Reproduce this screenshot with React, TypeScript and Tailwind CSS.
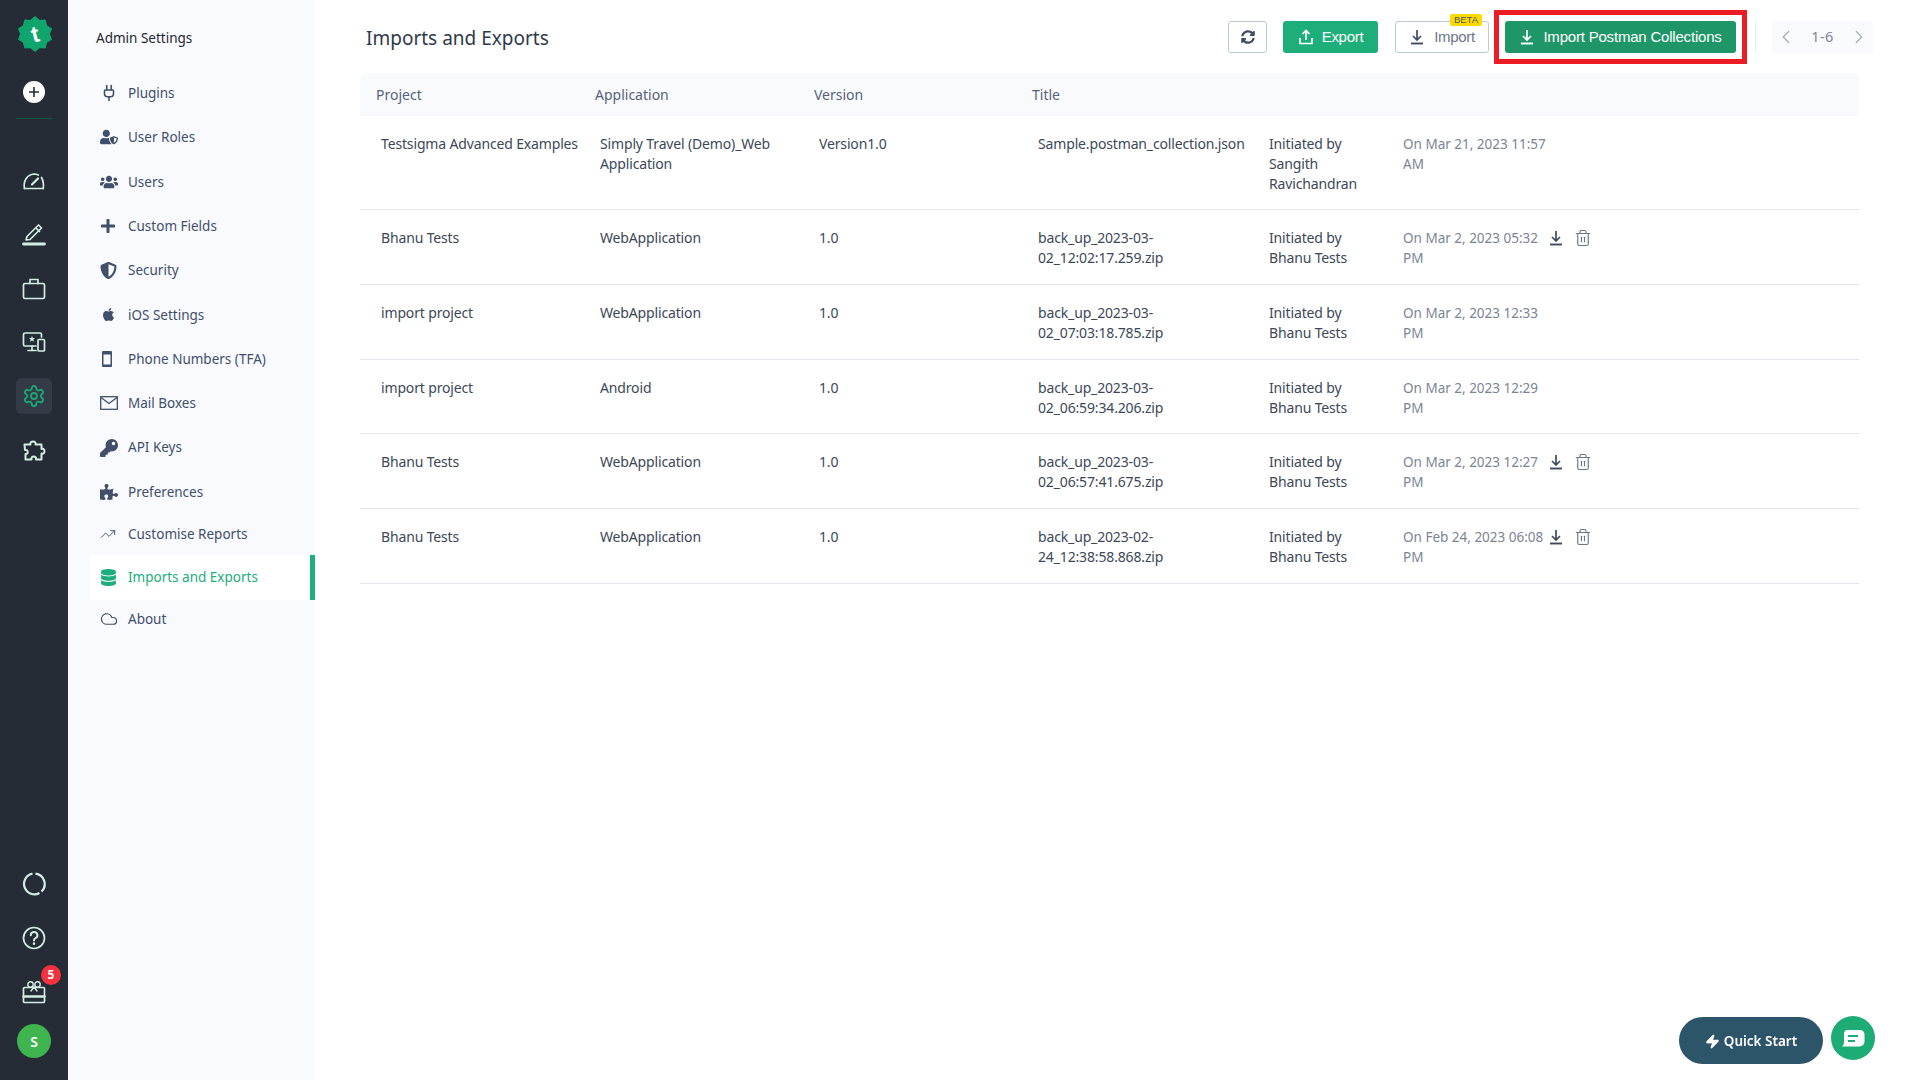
import React from "react";
import { Plug, Trash2, ChevronLeft, ChevronRight, Zap, TrendingUp, Cloud } from "lucide-react";
import { FaUserShield, FaUsers, FaShieldAlt, FaApple, FaKey, FaPuzzlePiece, FaDatabase, FaPlus, FaSyncAlt } from "react-icons/fa";

function PhoneIcon() {
  return (
    <svg width="14" height="18" viewBox="0 0 14 18">
      <rect x="2" y="1" width="10" height="16" rx="1" fill="#414f6b" />
      <rect x="3.5" y="4.5" width="7" height="10" fill="#f9fafd" />
    </svg>
  );
}
function MailIcon() {
  return (
    <svg width="18" height="14" viewBox="0 0 18 14" fill="none" stroke="#414f6b" strokeWidth="1.3">
      <rect x="0.7" y="0.7" width="16.6" height="12.6" />
      <path d="M1 1.5l8 6 8-6" />
    </svg>
  );
}
function DownArrow({ size = 16, color = "currentColor" }: { size?: number; color?: string }) {
  return (
    <svg width={size} height={size} viewBox="0 0 16 16" fill="none" stroke={color} strokeWidth="1.7">
      <path d="M8 1v9.5M4 7l4 4 4-4" />
      <path d="M2 14.5h12" strokeWidth="1.9" />
    </svg>
  );
}
function UpTray() {
  return (
    <svg width="16" height="16" viewBox="0 0 16 16" fill="none" stroke="currentColor" strokeWidth="1.7">
      <path d="M8 11V1.500M4.500 5L8 1.500 11.500 5" />
      <path d="M2 9v5.500h12V9" />
    </svg>
  );
}

const nav: { label: string; h: string; icon: React.ReactNode; active?: boolean }[] = [
  { label: "Plugins", h: "h-[44.3px]", icon: <Plug size={18} strokeWidth={2.1} /> },
  { label: "User Roles", h: "h-[44.3px]", icon: <FaUserShield size={18} /> },
  { label: "Users", h: "h-[44.3px]", icon: <FaUsers size={18} /> },
  { label: "Custom Fields", h: "h-[44.3px]", icon: <FaPlus size={16} /> },
  { label: "Security", h: "h-[44.3px]", icon: <FaShieldAlt size={17} /> },
  { label: "iOS Settings", h: "h-[44.3px]", icon: <FaApple size={15} className="ml-[1px]" /> },
  { label: "Phone Numbers (TFA)", h: "h-[44.3px]", icon: <PhoneIcon /> },
  { label: "Mail Boxes", h: "h-[44.3px]", icon: <MailIcon /> },
  { label: "API Keys", h: "h-[44.3px]", icon: <FaKey size={18} /> },
  { label: "Preferences", h: "h-[44.3px]", icon: <FaPuzzlePiece size={18} /> },
  { label: "Customise Reports", h: "h-[41px]", icon: <TrendingUp size={16} strokeWidth={1.4} /> },
  { label: "Imports and Exports", h: "h-[45px]", icon: <FaDatabase size={17} />, active: true },
  { label: "About", h: "h-[39px]", icon: <Cloud size={18} strokeWidth={1.6} /> },
];

const rows = [
  { p: "Testsigma Advanced Examples", a: "Simply Travel (Demo)_Web Application", v: "Version1.0", t: "Sample.postman_collection.json", i: "Initiated by Sangith Ravichandran", d: "On Mar 21, 2023 11:57 AM", act: false },
  { p: "Bhanu Tests", a: "WebApplication", v: "1.0", t: "back_up_2023-03-02_12:02:17.259.zip", i: "Initiated by Bhanu Tests", d: "On Mar 2, 2023 05:32 PM", act: true },
  { p: "import project", a: "WebApplication", v: "1.0", t: "back_up_2023-03-02_07:03:18.785.zip", i: "Initiated by Bhanu Tests", d: "On Mar 2, 2023 12:33 PM", act: false },
  { p: "import project", a: "Android", v: "1.0", t: "back_up_2023-03-02_06:59:34.206.zip", i: "Initiated by Bhanu Tests", d: "On Mar 2, 2023 12:29 PM", act: false },
  { p: "Bhanu Tests", a: "WebApplication", v: "1.0", t: "back_up_2023-03-02_06:57:41.675.zip", i: "Initiated by Bhanu Tests", d: "On Mar 2, 2023 12:27 PM", act: true },
  { p: "Bhanu Tests", a: "WebApplication", v: "1.0", t: "back_up_2023-02-24_12:38:58.868.zip", i: "Initiated by Bhanu Tests", d: "On Feb 24, 2023 06:08 PM", act: true },
];

function Logo() {
  const pts: string[] = [];
  const n = 20;
  for (let k = 0; k < n; k++) {
    const r = k % 2 === 0 ? 17.2 : 14.2;
    const a = (k / n) * Math.PI * 2 - Math.PI / 2;
    pts.push(`${(18 + r * Math.cos(a)).toFixed(2)},${(18 + r * Math.sin(a)).toFixed(2)}`);
  }
  return (
    <svg width="36" height="36" viewBox="0 0 36 36">
      <polygon points={pts.join(" ")} fill="#0fa56d" stroke="#0fa56d" strokeWidth="1.2" strokeLinejoin="round" />
      <text x="18" y="26" textAnchor="middle" fontSize="23" fontWeight="700" fontFamily="'Liberation Sans',sans-serif" fill="#fff" transform="rotate(-14 18 18)">t</text>
    </svg>
  );
}

const C = "#d3ece4";
const R = ({ children, mt = "mt-[18px]" }: { children: React.ReactNode; mt?: string }) => (
  <div className={`${mt} flex h-[36px] w-[36px] items-center justify-center`}>{children}</div>
);
const G = ({ children }: { children: React.ReactNode }) => (
  <svg width="24" height="24" viewBox="0 0 24 24" fill="none" stroke={C} strokeWidth="1.7" strokeLinejoin="round" strokeLinecap="round">{children}</svg>
);

export default function App() {
  return (
    <div className="flex h-[1080px] w-[1920px] overflow-hidden bg-white font-['Noto_Sans','Open_Sans',sans-serif]">
      <aside className="flex w-[68px] shrink-0 flex-col items-center bg-[#252c35]">
        <div className="ml-[2px] mt-[16px] flex h-[36px] items-center justify-center"><Logo /></div>
        <div className="mt-[29px] flex h-[22px] w-[22px] items-center justify-center rounded-full bg-white">
          <svg width="12" height="12" viewBox="0 0 12 12" stroke="#252c35" strokeWidth="1.6"><path d="M6 1v10M1 6h10" /></svg>
        </div>
        <div className="mt-[15px] h-px w-[36px] bg-[#0d5c42]" />
        <R mt="mt-[42.5px]"><G><path d="M2.500 20.500c-1.500-7 2.500-14 9.500-14.500 1.500 0 3 .300 4.300 1" /><path d="M19.500 9.500c1.800 3.300 2.300 7 1.800 11" /><path d="M2.500 20.500H21.300" /><path d="M10 16.500l6-6" strokeWidth="2.200" /></G></R>
        <R><G><path d="M4 16.500L15.500 5l3 3L7 19.500l-4 .500z" transform="translate(1 -2)" /><path d="M14.500 6.500l3 3" /><path d="M1.500 22h21" strokeWidth="2.800" /></G></R>
        <R><G><rect x="1.500" y="7.500" width="21" height="15" rx="1.500" /><path d="M8 7.500V3.500h8v4" /></G></R>
        <R><G><path d="M14 16H3a1.500 1.500 0 0 1-1.500-1.500v-10A1.500 1.500 0 0 1 3 3h15a1.500 1.500 0 0 1 1.500 1.500V7" /><path d="M6 20.500h8M10 16v4.500" /><rect x="16" y="9.500" width="6.500" height="11.500" rx="1" /><path d="M10 6l.900 2 2.100.200-1.600 1.400.500 2.100-1.900-1.100-1.900 1.100.500-2.100L7 8.200 9.100 8z" fill={C} stroke="none" /></G></R>
        <R mt="mt-[18px]">
          <span className="flex h-[36px] w-[36px] items-center justify-center rounded-md bg-[#343b47]">
            <svg width="24" height="24" viewBox="0 0 24 24" fill="none" stroke="#1aa873" strokeWidth="1.800" strokeLinejoin="round"><path d="M12.220 2h-.440a2 2 0 0 0-2 2v.180a2 2 0 0 1-1 1.730l-.430.250a2 2 0 0 1-2 0l-.150-.080a2 2 0 0 0-2.730.730l-.220.380a2 2 0 0 0 .730 2.730l.150.100a2 2 0 0 1 1 1.720v.510a2 2 0 0 1-1 1.740l-.150.090a2 2 0 0 0-.730 2.730l.220.380a2 2 0 0 0 2.730.730l.150-.080a2 2 0 0 1 2 0l.430.250a2 2 0 0 1 1 1.730V20a2 2 0 0 0 2 2h.440a2 2 0 0 0 2-2v-.180a2 2 0 0 1 1-1.730l.430-.250a2 2 0 0 1 2 0l.150.080a2 2 0 0 0 2.730-.730l.220-.390a2 2 0 0 0-.730-2.730l-.150-.080a2 2 0 0 1-1-1.740v-.500a2 2 0 0 1 1-1.740l.150-.090a2 2 0 0 0 .730-2.730l-.220-.380a2 2 0 0 0-2.730-.730l-.150.080a2 2 0 0 1-2 0l-.430-.250a2 2 0 0 1-1-1.730V4a2 2 0 0 0-2-2z" /><circle cx="12" cy="12" r="3" /></svg>
          </span>
        </R>
        <R><G><path d="M2.500 6.500H8.500C7 2.500 15 2.500 13.500 6.500H19.500V11c4-1.500 4 6 0 4.500V21.500H14c1-4-5.500-4-4.500 0H3.500V16c3 1 3-5 -.500-4z" strokeWidth="2" /></G></R>

        <div className="mt-auto flex h-[36px] w-[36px] items-center justify-center">
          <svg width="24" height="24" viewBox="0 0 24 24" fill="none" stroke={C} strokeWidth="2.200"><path d="M13.500 1.700A10.400 10.400 0 0 1 19.500 19.500" /><path d="M17.500 21A10.400 10.400 0 1 1 10.500 1.700" /></svg>
        </div>
        <R><G><circle cx="12" cy="12" r="10.500" /><path d="M8.800 9.200a3.300 3.300 0 1 1 4.700 3c-1 .500-1.500 1.100-1.500 2.300" strokeWidth="2" /><path d="M12 17.500v.300" strokeWidth="2.400" /></G></R>
        <div className="relative mt-[18px] flex h-[36px] w-[36px] items-center justify-center">
          <G><rect x="1.500" y="7.500" width="21" height="15" rx="1" /><path d="M1.500 16.500h21" strokeWidth="2.400" /><circle cx="8.500" cy="4.500" r="2.700" strokeWidth="1.400" /><circle cx="15.500" cy="4.500" r="2.700" strokeWidth="1.400" /><path d="M12 7l-3 4M12 7l3 4" strokeWidth="1.400" /></G>
          <span className="absolute left-[25px] top-[-9px] flex h-[20px] w-[20px] items-center justify-center rounded-full bg-[#f5333f] text-[12px] font-bold text-white">5</span>
        </div>
        <div className="mb-[22px] mt-[14px] flex h-[34px] w-[34px] items-center justify-center rounded-full bg-[#3eb54f] text-[14px] font-semibold text-white">S</div>
      </aside>

      <nav className="w-[247px] shrink-0 bg-[#f9fafd] pl-[22px]">
        <div className="h-[71px] pl-[6px] pt-[27px] text-[13.5px] leading-[22px] text-[#1f2733]">Admin Settings</div>
        {nav.map((n) => (
          <div key={n.label} className={`flex items-center ${n.h} pl-[10px] text-[13.5px] ${n.active ? "border-r-[5px] border-[#1cb07e] bg-white text-[#1cae7c]" : "text-[#414f6b]"}`}>
            <span className="flex w-[28px] shrink-0 items-center justify-start">{n.icon}</span>
            <span className="whitespace-nowrap">{n.label}</span>
          </div>
        ))}
      </nav>

      <main className="min-w-0 flex-1 pl-[45px] pr-[61px]">
        <header className="flex h-[72.5px] items-start pt-[21px]">
          <h1 className="ml-[6px] mt-[1px] text-[19px] font-normal leading-[32px] text-[#2f3a4a]">Imports and Exports</h1>
          <div className="ml-auto flex items-center">
            <button className="flex h-[32px] w-[39px] items-center justify-center rounded-[3px] border border-[#bccad6] text-[#3f4a66]"><FaSyncAlt size={14} /></button>
            <button className="ml-[16px] flex h-[32px] w-[95px] items-center justify-center gap-[8px] rounded-[3px] bg-[#1eae79] font-['Liberation_Sans',sans-serif] text-[15px] tracking-[-0.3px] text-white"><UpTray />Export</button>
            <button className="relative ml-[17px] flex h-[32px] w-[94px] items-center justify-center gap-[9px] rounded-[3px] border border-[#bccad6] font-['Liberation_Sans',sans-serif] text-[15px] tracking-[-0.3px] text-[#6d7788]"><DownArrow color="#3f4a66" />Import
              <span className="absolute right-[6px] top-[-8px] rounded-[2px] bg-[#ffd900] px-[4px] text-[9.5px] leading-[12px] tracking-normal text-[#4a5568]">BETA</span>
            </button>
            <div className="my-[-11px] ml-[5px] border-[5px] border-[#ed1c24] bg-white px-[6px] py-[6px]">
              <button className="flex h-[32px] w-[231px] items-center justify-center gap-[8px] rounded-[3px] bg-[#1f9668] font-['Liberation_Sans',sans-serif] text-[15px] tracking-[-0.2px] text-white"><DownArrow />Import Postman Collections</button>
            </div>
            <div className="ml-[8px] h-[32px] w-px bg-[#e8ebf0]" />
            <div className="ml-[16px] mr-[-14px] flex h-[32px] w-[101px] items-center justify-between rounded-[3px] bg-[#f9fafc] px-[3px] text-[14.5px] tracking-[0.4px] text-[#7c8696]">
              <ChevronLeft size={22} strokeWidth={1.3} className="text-[#a5adb8]" />1-6<ChevronRight size={22} strokeWidth={1.3} className="text-[#a5adb8]" />
            </div>
          </div>
        </header>

        <div className="grid h-[43px] grid-cols-[219px_219px_218px_1fr] items-center rounded-t-[6px] bg-[#f9fafc] pl-[16px] text-[14px] text-[#56627a]">
          <span>Project</span><span>Application</span><span>Version</span><span>Title</span>
        </div>

        {rows.map((r, k) => (
          <div key={k} className="grid grid-cols-[219px_219px_219px_230px_135px_145px_1fr] border-b border-[#e3e6ec] pb-[15.7px] pl-[21px] pt-[18px] text-[14px] leading-[20px] tracking-[-0.15px] text-[#3c4858]">
            <span className="whitespace-nowrap">{r.p}</span>
            <span className="pr-[30px]">{r.a}</span>
            <span>{r.v}</span>
            <span className="pr-[10px]">{r.t}</span>
            <span className="ml-[1px] w-[110px]">{r.i}</span>
            <span className="text-[13.5px] tracking-normal text-[#7a8594]">{r.d}</span>
            <span className="flex gap-[10px] pt-[2px]">
              {r.act && <>
                <DownArrow color="#3f4a5a" />
                <Trash2 size={18} strokeWidth={1.5} className="mt-[-1px] text-[#6b7583]" />
              </>}
            </span>
          </div>
        ))}
      </main>

      <div className="fixed bottom-[16px] right-[45px] flex items-start gap-[8px]">
        <button className="flex h-[47px] w-[144px] items-center justify-center gap-[4px] rounded-full bg-[#2d5569] pt-[1px] text-[13.5px] font-semibold text-white"><Zap size={15} fill="white" />Quick Start</button>
        <button className="mt-[-1px] flex h-[44px] w-[44px] items-center justify-center rounded-full bg-[#1dab76]">
          <svg width="24" height="19" viewBox="0 0 24 19"><path d="M6 1h13a4.500 4.500 0 0 1 4.500 4.500v7a5 5 0 0 1-5 5H1c1.500-1 2-3 2-5V5a4 4 0 0 1 3-4z" fill="#fff" /><path d="M7 7h10M7 12h7" stroke="#1dab76" strokeWidth="1.8" /></svg>
        </button>
      </div>
    </div>
  );
}
